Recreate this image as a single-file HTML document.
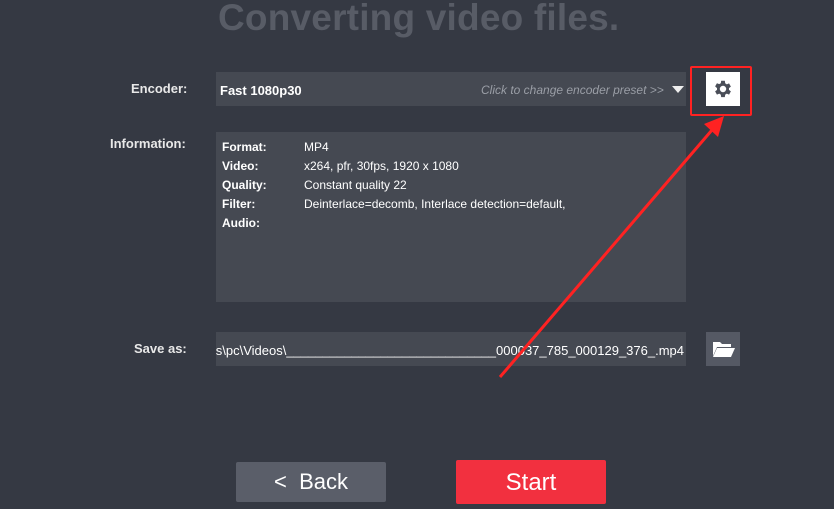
<!DOCTYPE html><html><head><style>
body{margin:0;width:834px;height:509px;background:#353943;font-family:"Liberation Sans",Arial,sans-serif;position:relative;overflow:hidden;color:#fff}
.a{position:absolute}
.lbl{font-weight:bold;font-size:13px;color:#e8e8e8}
.f{background:#454952}
</style></head><body>
<div class="a" style="left:218px;top:-3px;font-size:37px;font-weight:bold;color:#585c66;letter-spacing:0.2px">Converting video files.</div>
<div class="a" style="left:22px;top:-4px;width:10px;height:4px;background:#a86a20"></div>
<div class="a" style="left:110px;top:-4px;width:8px;height:4px;background:#2a8a20"></div>
<div class="a lbl" style="left:131px;top:81px">Encoder:</div>
<div class="a f" style="left:216px;top:72px;width:470px;height:34px"></div>
<div class="a lbl" style="left:220px;top:83px;color:#fff">Fast 1080p30</div>
<div class="a" style="left:481px;top:83px;font-size:12px;font-style:italic;color:#9a9ea6">Click to change encoder preset &gt;&gt;</div>
<div class="a" style="left:672px;top:86px;width:0;height:0;border-left:6px solid transparent;border-right:6px solid transparent;border-top:7px solid #eee"></div>
<div class="a" style="left:690px;top:66px;width:58px;height:46px;border:2px solid #f22;border-radius:2px"></div>
<div class="a" style="left:706px;top:72px;width:34px;height:34px;background:#fff"></div>
<svg class="a" style="left:712px;top:78px" width="22" height="22" viewBox="0 0 24 24"><path fill="#4a4e58" d="M19.4 13a7.5 7.5 0 000-2l2.1-1.6-2-3.5-2.5 1a7.4 7.4 0 00-1.7-1L14.9 3h-4l-.4 2.7a7.4 7.4 0 00-1.7 1l-2.5-1-2 3.5L6.4 11a7.5 7.5 0 000 2l-2.1 1.6 2 3.5 2.5-1a7.4 7.4 0 001.7 1l.4 2.7h4l.4-2.7a7.4 7.4 0 001.7-1l2.5 1 2-3.5zM12.9 15.5a3.5 3.5 0 110-7 3.5 3.5 0 010 7z" transform="translate(-0.9 0)"/></svg>
<div class="a lbl" style="left:110px;top:136px">Information:</div>
<div class="a f" style="left:216px;top:132px;width:470px;height:170px"></div>
<div class="a" style="left:222px;top:138px;font-size:12px;line-height:19px;font-weight:bold">Format:<br>Video:<br>Quality:<br>Filter:<br>Audio:</div>
<div class="a" style="left:304px;top:138px;font-size:12px;line-height:19px">MP4<br>x264, pfr, 30fps, 1920 x 1080<br>Constant quality 22<br>Deinterlace=decomb, Interlace detection=default,</div>
<div class="a lbl" style="left:134px;top:341px">Save as:</div>
<div class="a f" style="left:216px;top:332px;width:470px;height:34px;overflow:hidden"><div style="position:absolute;right:2px;top:11px;font-size:13px;white-space:nowrap">s\pc\Videos\_____________________________000037_785_000129_376_.mp4</div></div>
<div class="a" style="left:706px;top:332px;width:34px;height:34px;background:#555964"></div>
<svg class="a" style="left:712px;top:339px" width="24" height="20" viewBox="0 0 24 20"><path fill="#fff" d="M1 3h7l2 2h9v3H5L1 17z"/><path fill="#fff" d="M5 9h18l-4 9H1z"/></svg>
<div class="a" style="left:236px;top:462px;width:150px;height:40px;background:#5a5e69;font-size:22px;line-height:40px;text-align:center;border-radius:2px">&lt;&nbsp; Back</div>
<div class="a" style="left:456px;top:460px;width:150px;height:44px;background:#f2303f;font-size:24px;line-height:46px;text-align:center;border-radius:2px">Start</div>
<svg class="a" style="left:0;top:0" width="834" height="509"><line x1="500" y1="377" x2="712" y2="130" stroke="#f22" stroke-width="3"/><polygon points="724,116 704,124 718,137" fill="#f22"/></svg>
</body></html>
